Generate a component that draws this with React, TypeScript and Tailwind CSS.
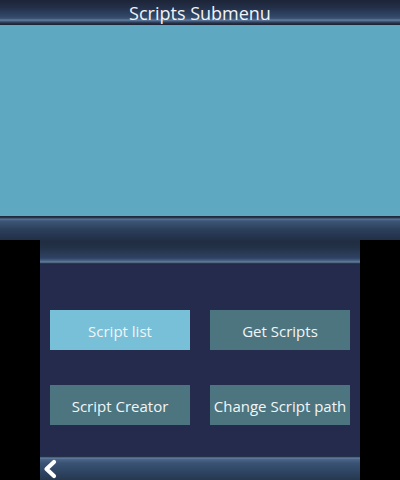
const barTop =
  "bg-[linear-gradient(to_bottom,#1c2436_0px,#24304a_8px,#33496a_17px,#3d5878_19px,#6a84a6_20px,#4a6284_21px,#26324a_23px,#1a2030_25px)]";

const barJoin =
  "bg-[linear-gradient(to_bottom,#1c2436_0px,#2a3a55_2px,#5a7598_3px,#3d5677_5px,#2b3e5a_14px,#202d42_26px,#233248_32px,#2f4262_42px,#4b6588_45px,#6a86a8_46px,#33465f_47px,#1f2a40_48px,#252b4d_49px)]";

const barFoot =
  "bg-[linear-gradient(to_bottom,#1c2436_0px,#2c3e5a_1px,#6a86a8_2px,#4c6689_3px,#3a5374_7px,#2e4462_16px,#26384f_24px)]";

function MenuButton({ label, active }: { label: string; active?: boolean }) {
  return (
    <div
      className={`flex h-10 w-[140px] items-center justify-center pt-[3px] text-[15px] text-[#f2f5f7] ${
        active ? "bg-[#78bfd8]" : "bg-[#4d7580]"
      }`}
    >
      {label}
    </div>
  );
}

export default function App() {
  return (
    <div
      className="flex h-[480px] w-[400px] flex-col bg-black"
      style={{ fontFamily: '"Open Sans", "Noto Sans", sans-serif' }}
    >
      {/* top screen */}
      <div className="flex h-[240px] flex-col">
        <div className={`flex h-[25px] items-center justify-center ${barTop}`}>
          <span className="text-[18px] leading-none text-[#f2f4f6]">Scripts Submenu</span>
        </div>
        <div className="h-[191px] bg-[#5fa8c2]" />
        <div className={`h-6 ${barJoin} bg-[length:100%_49px] bg-no-repeat`} />
      </div>

      {/* bottom screen */}
      <div className="flex h-[240px]">
        <div className="w-10 bg-black" />
        <div className="flex w-80 flex-col bg-[#252b4d]">
          <div className={`h-[25px] ${barJoin} bg-[length:100%_49px] bg-[position:0_-24px] bg-no-repeat`} />
          <div className="flex-1">
            <div className="mt-[45px] grid grid-cols-[140px_140px] gap-x-5 gap-y-[35px] pl-2.5">
              <MenuButton label="Script list" active />
              <MenuButton label="Get Scripts" />
              <MenuButton label="Script Creator" />
              <MenuButton label="Change Script path" />
            </div>
          </div>
          <div className={`flex h-6 items-center pl-[2px] ${barFoot}`}>
            <svg width="16" height="20" viewBox="0 0 16 20" className="mt-[1px]">
              <polyline
                points="12,3 4.5,10 12,17"
                fill="none"
                stroke="#ffffff"
                strokeWidth="4.2"
                strokeLinecap="round"
                strokeLinejoin="round"
              />
            </svg>
          </div>
        </div>
        <div className="w-10 bg-black" />
      </div>
    </div>
  );
}
